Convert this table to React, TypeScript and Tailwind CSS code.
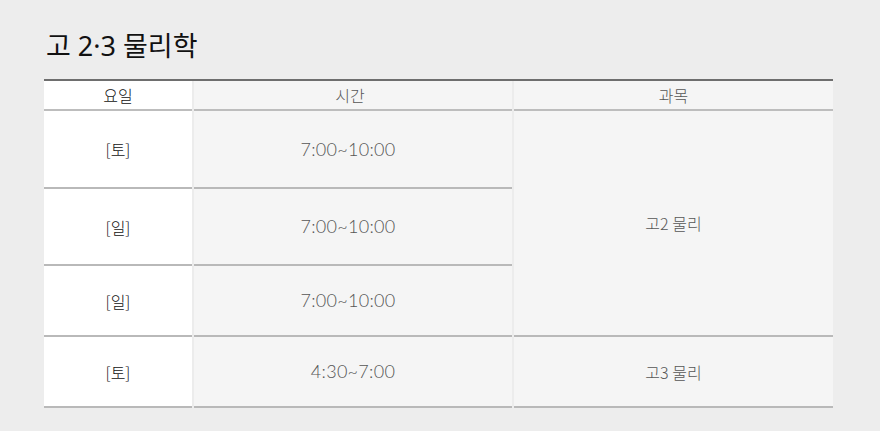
const ROWS = [
  { day: "[토]", time: "7:00~10:00" },
  { day: "[일]", time: "7:00~10:00" },
  { day: "[일]", time: "7:00~10:00" },
  { day: "[토]", time: "4:30~7:00" },
];

const ROW_H = ["h-[78px]", "h-[77px]", "h-[71px]", "h-[71px]"];

const KR = "font-['Noto_Sans_CJK_KR',sans-serif]";
const NUM = "font-['Lato','Noto_Sans_CJK_KR',sans-serif]";

export default function App() {
  return (
    <div className={`min-h-[431px] w-[880px] bg-[#ededed] pl-[44px] pt-[26px] ${KR}`}>
      <h1 className="pl-[2px] font-['Noto_Sans','Noto_Sans_CJK_KR',sans-serif] text-[27px] font-normal leading-[40px] text-[#111]">
        고 2·3 물리학
      </h1>

      <div className="mt-[13px] w-[789px] border-t-2 border-[#6e6e6e]">
        <div className="grid grid-cols-[148px_318px_319px] gap-x-[2px] bg-[#ececec]">
          {/* header */}
          <div className="flex h-[30px] items-center justify-center border-b-2 border-[#bdbdbd] bg-white text-[16px] font-light text-[#111]">
            요일
          </div>
          <div className="flex h-[30px] items-center justify-center border-b-2 border-[#bdbdbd] bg-[#f5f5f5] text-[16px] font-light text-[#555]">
            <span className="pr-[6px]">시간</span>
          </div>
          <div className="flex h-[30px] items-center justify-center border-b-2 border-[#bdbdbd] bg-[#f5f5f5] text-[16px] font-light text-[#555]">
            과목
          </div>

          {/* day + time columns */}
          <div className="col-span-2 row-span-4 grid grid-cols-[148px_318px] gap-x-[2px]">
            {ROWS.map((r, i) => (
              <div key={i} className="contents">
                <div
                  className={`flex ${ROW_H[i]} items-center justify-center border-b-2 border-[#b9b9b9] bg-white text-[16px] font-light text-[#111]`}
                >
                  {r.day}
                </div>
                <div
                  className={`flex ${ROW_H[i]} items-center justify-center border-b-2 border-[#b9b9b9] bg-[#f5f5f5] text-[18px] font-light tracking-[0.3px] text-[#555] ${NUM}`}
                >
                  <span className={i === 3 ? "pr-0" : "pr-[10px]"}>{r.time}</span>
                </div>
              </div>
            ))}
          </div>

          {/* subject column */}
          <div className="row-span-4 flex flex-col">
            <div className="flex h-[226px] items-center justify-center border-b-2 border-[#b9b9b9] bg-[#f5f5f5] text-[16px] font-light text-[#555]">
              고2 물리
            </div>
            <div className="flex h-[71px] items-center justify-center border-b-2 border-[#b9b9b9] bg-[#f5f5f5] text-[16px] font-light text-[#555]">
              고3 물리
            </div>
          </div>
        </div>
      </div>
    </div>
  );
}
